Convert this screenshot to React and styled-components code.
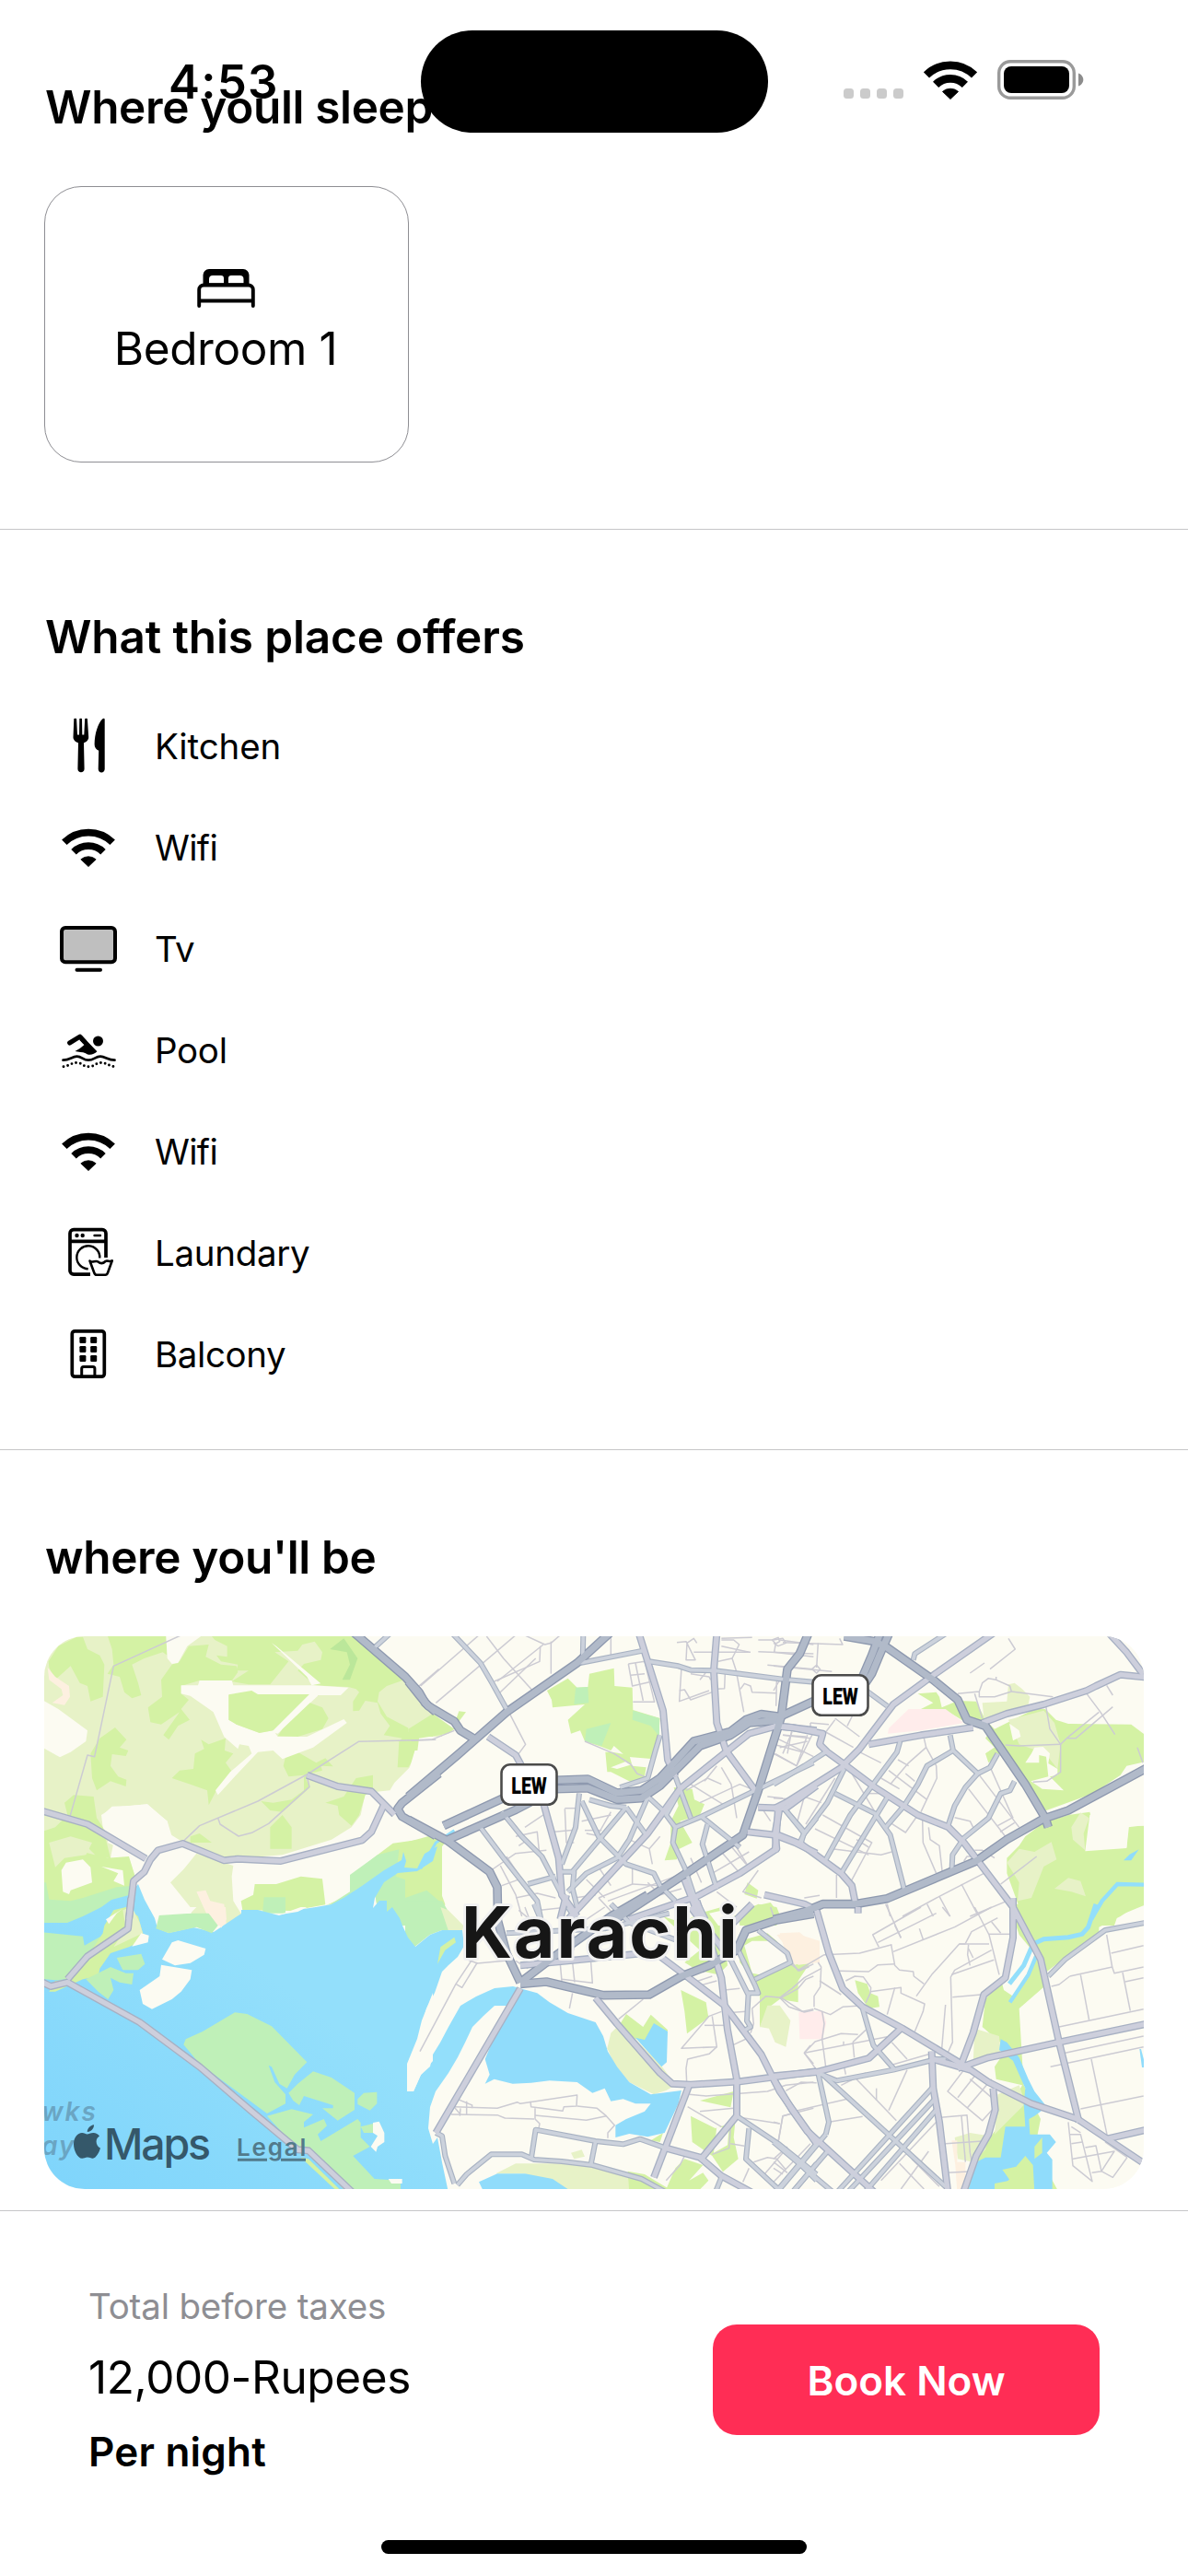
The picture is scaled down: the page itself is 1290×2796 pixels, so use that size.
import React from "react";
import styled, { createGlobalStyle } from "styled-components";

const GlobalStyle = createGlobalStyle`
  *, *::before, *::after { box-sizing: border-box; }
  html, body { margin: 0; padding: 0; background: #fff; }
  body { font-family: Inter, "Liberation Sans", sans-serif; color: #000; }
  svg { display: block; flex: none; }
`;

/* ---------- layout ---------- */

const Screen = styled.main`
  position: relative;
  display: flex;
  flex-direction: column;
  width: 1290px;
  height: 2796px;
  overflow: hidden;
  background: #fff;
`;

const StatusBar = styled.header`
  position: absolute;
  top: 0;
  left: 0;
  display: grid;
  grid-template-columns: 457px 377px 456px;
  align-items: center;
  width: 100%;
  height: 177px;
`;

const Clock = styled.time`
  padding-left: 183px;
  font-size: 51px;
  font-weight: 600;
  line-height: 60px;
  letter-spacing: 1.2px;
`;

const Island = styled.div`
  height: 111px;
  border-radius: 56px;
  background: #000;
`;

const StatusIcons = styled.div`
  display: flex;
  align-items: flex-end;
  padding-left: 82px;
  padding-bottom: 4px;
`;

const SignalDots = styled.div`
  display: flex;
  gap: 7px;
  margin-right: 22px;
  padding-bottom: 1px;
`;

const SignalDot = styled.span`
  width: 11px;
  height: 11px;
  border-radius: 3.5px;
  background: #cbcbcb;
`;

const BatterySlot = styled.div`
  margin-left: 22px;
`;

const Section = styled.section`
  padding: 86px 48px ${(p) => p.$bottom}px;
  border-bottom: 1px solid #c6c6c8;
`;

const SectionTitle = styled.h2`
  margin: 0 0 ${(p) => p.$gap}px;
  padding-left: 1px;
  font-size: 49.5px;
  font-weight: 600;
  line-height: 60px;
  letter-spacing: ${(p) => p.$tracking || 0}px;
`;

const RoomCard = styled.article`
  display: flex;
  flex-direction: column;
  align-items: center;
  gap: 14px;
  width: 396px;
  height: 300px;
  padding: 89px 2px 0 0;
  border: 1px solid #8e8e93;
  border-radius: 40px;
`;

const RoomName = styled.span`
  font-size: 49.5px;
  line-height: 60px;
  letter-spacing: -0.4px;
`;

const AmenityList = styled.ul`
  margin: 0;
  padding: 0;
  list-style: none;
`;

const Amenity = styled.li`
  display: flex;
  align-items: center;
  gap: 24px;
  height: 110px;
`;

const AmenityIcon = styled.div`
  display: flex;
  justify-content: center;
  width: 96px;
`;

const AmenityName = styled.span`
  padding-top: 1px;
  font-size: 38.5px;
  line-height: 47px;
  letter-spacing: ${(p) => p.$tracking}px;
`;

const MapCard = styled.div`
  width: 1194px;
  height: 600px;
  overflow: hidden;
  border-radius: 44px;
  background: #fcfbf2;
`;

const BookingBar = styled.footer`
  display: flex;
  justify-content: space-between;
  align-items: flex-start;
  height: 357px;
  padding: 12px 96px 0;
`;

const PriceColumn = styled.div`
  display: flex;
  flex-direction: column;
  gap: 24px;
  padding-top: 68px;
`;

const PriceNote = styled.span`
  font-size: 38.5px;
  line-height: 46px;
  letter-spacing: -0.17px;
  color: #8e8e93;
`;

const Price = styled.span`
  font-size: 49.5px;
  line-height: 60px;
  letter-spacing: -0.4px;
`;

const PricePeriod = styled.span`
  font-size: 44px;
  font-weight: 600;
  line-height: 54px;
  letter-spacing: 0.2px;
`;

const BookButton = styled.button`
  width: 420px;
  height: 120px;
  margin: 111px 0 0;
  padding: 2px 0 0;
  border: 0;
  border-radius: 26px;
  background: #ff2d55;
  color: #fff;
  font: 600 44px/54px Inter, "Liberation Sans", sans-serif;
`;

const HomeIndicator = styled.div`
  align-self: center;
  width: 462px;
  height: 15px;
  border-radius: 8px;
  background: #000;
`;

/* ---------- icons ---------- */

const arc = (r, k) => {
  const y = Math.sqrt(1 - k * k) * r;
  return `M${-r * k} ${-y}A${r} ${r} 0 0 1 ${r * k} ${-y}`;
};

function WifiIcon({ outer = 37.4, middle = 22.8, weight = 7.8, dot = 12.4, size = 58 }) {
  const k = dot * 0.66;
  return (
    <svg width={size} height={42} viewBox={`${-size / 2} -42 ${size} 42`} fill="none">
      <path d={arc(outer, 0.7)} stroke="#000" strokeWidth={weight} />
      <path d={arc(middle, 0.7)} stroke="#000" strokeWidth={weight} />
      <path
        d={`M0 -0.4L${-k} ${-k}A${dot} ${dot} 0 0 1 ${k} ${-k}Z`}
        fill="#000"
        stroke="#000"
        strokeWidth="0.8"
        strokeLinejoin="round"
      />
    </svg>
  );
}

function BatteryIcon() {
  return (
    <svg width="94" height="43" viewBox="0 0 94 43">
      <rect x="1.7" y="1.7" width="81.6" height="39.6" rx="12.5" fill="none" stroke="#9a9a9a" strokeWidth="3.4" />
      <rect x="7" y="7" width="71" height="29" rx="8" />
      <path d="M88 14.5c3 1 5.3 3.8 5.3 7s-2.3 6-5.3 7z" fill="#8c8c8c" />
    </svg>
  );
}

function BedIcon() {
  return (
    <svg width="63" height="42" viewBox="214 292 63 42">
      <path
        fillRule="evenodd"
        d="M220.5 309V298.5a6.5 6.5 0 0 1 6.5-6.5h37a6.5 6.5 0 0 1 6.5 6.5V309ZM227 307.3h16v-5.3a3 3 0 0 0-3-3h-9a4 4 0 0 0-4 4ZM248 307.3h16.5v-4.3a4 4 0 0 0-4-4h-9.5a3 3 0 0 0-3 3Z"
      />
      <path
        d="M216.2 332V314.5a5 5 0 0 1 5-5h48.6a5 5 0 0 1 5 5V332M216.2 326.5H274.8"
        fill="none"
        stroke="#000"
        strokeWidth="3.9"
        strokeLinecap="round"
      />
    </svg>
  );
}

const AmenitySvg = ({ children }) => (
  <svg width="64" height="64" viewBox="64 -32 64 64">
    {children}
  </svg>
);

const KitchenIcon = () => (
  <AmenitySvg>
    <path d="M80.3 -30q1.4 -.6 2.8 0l.9 17.5h2l.3 -17.5q1.4 -.6 2.7 0l.3 17.5h2l.9 -17.5q1.4 -.6 2.7 0l1.3 20c.2 3.5-3 5.5-5.2 6.3l.6 28.2c0 5-7.2 5-7.2 0l.6 -28.2c-2.3-.8-5.7-2.8-5.5-6.3z" />
    <path d="M113.7 -29v53.8c0 4.8-7 4.8-7 0l.5 -20c-2.5-1-4.7-3.5-4.6-7c.2-11.5 3.7-22.5 8.5-27.3c1.2-1.2 2.6-.9 2.6.5z" />
  </AmenitySvg>
);

const TvIcon = () => (
  <AmenitySvg>
    <rect x="67" y="-23" width="58" height="37.3" rx="4" fill="#bfbfbf" stroke="#000" strokeWidth="4" />
    <path d="M83.5 22.8h25.5" stroke="#000" strokeWidth="4" strokeLinecap="round" />
  </AmenitySvg>
);

const PoolIcon = () => (
  <AmenitySvg>
    <circle cx="106.5" cy="-10" r="5.5" />
    <path d="M75.6 -8L86.8 -14.8L92 -9" fill="none" stroke="#000" strokeWidth="5" strokeLinecap="round" strokeLinejoin="round" />
    <path d="M88.8 -16L105.4 1.3C102 4.5 97 6.2 93 3.3C89.5 1.5 85 2.2 81.5 1C85 -1 88.5 -3 91.5 -6L86.5 -11Z" />
    <path
      d="M68.5 10.7C76 10.7 78 6.7 83.5 6.7S90 10.7 96 10.7S103.5 6.7 109 6.7S117 10.7 124.5 10.7"
      fill="none"
      stroke="#000"
      strokeWidth="2.7"
      strokeLinecap="round"
    />
    <path
      d="M69 17.8C76 16.3 78 13.5 83.5 13.5S90 17.8 96.3 17.8S104 13.5 109.5 13.5S117 16.3 124 17.8"
      fill="none"
      stroke="#000"
      strokeWidth="2.9"
      strokeLinecap="round"
      strokeDasharray="0 4.76"
    />
  </AmenitySvg>
);

const LaundryIcon = () => (
  <AmenitySvg>
    <path
      d="M98 23.2H80a4 4 0 0 1-4-4V-21.3a4 4 0 0 1 4-4H111a4 4 0 0 1 4 4V5M76 -12.7H115"
      fill="none"
      stroke="#000"
      strokeWidth="3.7"
    />
    <circle cx="83.5" cy="-19" r="2.2" />
    <circle cx="89.7" cy="-19" r="2.2" />
    <path d="M102.5 -19h6.5" stroke="#000" strokeWidth="2.4" strokeLinecap="round" />
    <path d="M108.3 5.5A12.5 12.5 0 1 0 95.7 17.2" fill="none" stroke="#000" strokeWidth="2.4" />
    <path
      d="M97.5 8.5C100 11.5 103.5 7.5 106.5 9.5C109.5 12 112 11.5 114.5 9C117 7.5 119 10.5 121.8 8.3L117 21.5Q116.2 23.7 114.5 23.7H104.8Q103 23.7 102.3 21.5Z"
      fill="#fff"
      stroke="#000"
      strokeWidth="2.6"
      strokeLinejoin="round"
    />
  </AmenitySvg>
);

const BuildingIcon = () => (
  <AmenitySvg>
    <rect x="78.3" y="-25.2" width="35" height="49.4" rx="3" fill="none" stroke="#000" strokeWidth="3.7" />
    {[-19, -9, 1].map((y) => (
      <React.Fragment key={y}>
        <rect x="86.4" y={y} width="7" height="7" rx="1.2" />
        <rect x="98.2" y={y} width="7" height="7" rx="1.2" />
      </React.Fragment>
    ))}
    <path d="M88.7 24V15.5a2 2 0 0 1 2-2h10.2a2 2 0 0 1 2 2V24" fill="none" stroke="#000" strokeWidth="3" />
  </AmenitySvg>
);

/* ---------- map ---------- */

// The map is drawn as six tiles at three units per pixel; each entry below
// starts with the tile its coordinates belong to.
const TILES = {
  a: [40, 1770],
  b: [450, 1770],
  c: [840, 1770],
  d: [40, 2070],
  e: [450, 2070],
  f: [840, 2070],
};

const tileTransform = (id) => `translate(${TILES[id][0]} ${TILES[id][1]}) scale(.33333)`;

const FILL = {
  land: "#fcfbf2",
  meadow: "#e7f2c7",
  park: "#d4f2a4",
  forest: "#bbe79a",
  marsh: "#bff0b8",
  water: "#93dffb",
  pink: "#ffeceb",
  peach: "#fdf0e0",
};

const GROUND = [
  ["a", "meadow", "M0,0H1040L1220,160 1290,270 1320,300V345H1245L1240,400 1215,445 1165,495 1150,520 1100,525 1070,530 1055,600 1025,640 960,680 800,730 610,745 470,685 430,660 425,620 400,600 360,565 250,575 210,600 215,640 250,690 240,740 300,740 320,800 300,860 180,880 110,900 0,900Z"],
  ["a", "park", "M38,100L70,50 130,20H150L165,60 205,80 220,110 215,215 175,230 165,180 140,170 110,115 60,160 40,120Z"],
  ["a", "park", "M225,0H420L425,80 410,70 350,90 310,110 330,170 340,210 310,220 285,200 270,150 230,140 250,110 245,60Z"],
  ["a", "park", "M495,50L560,45 550,85 600,110 650,115 655,135 630,170 530,162 470,180 470,205 495,225 470,255 498,290 460,310 430,355 412,340 465,265 405,305 370,298 362,250 408,215 405,160 440,110 465,100Z"],
  ["a", "park", "M555,0H1040L1210,155 1140,180 1115,200 1110,230 1140,280 1220,322 1290,315V345H1245L1240,400 1210,445 1175,445 1180,360 1190,350 1130,340 1150,310 1120,270 1110,235 1070,228 1050,260 1030,262 1030,230 1050,200 1040,190 1015,183 905,178 850,130 870,108 925,95 930,70 905,35 865,45 850,65 775,70 820,100 760,175 690,175 635,165 690,130 650,130 655,110 600,100 585,80 620,85 620,50 580,30Z"],
  ["a", "forest", "M955,60L1000,25 1045,90 1020,160H995L1020,110 1010,70Z"],
  ["a", "park", "M205,350L255,315 292,355 270,380 298,390 290,408 245,402 240,440 265,475 292,485 290,507 240,490 195,520 180,480 175,400Z"],
  ["a", "park", "M0,660L60,640 100,600 90,560 120,535 185,540 195,610 215,640 240,740 195,735 160,700 110,690 150,720 230,740 300,735 320,800 300,860 240,870 110,900H0Z"],
  ["a", "meadow", "M40,690L110,670 180,690 160,730 90,740 60,770Z"],
  ["a", "marsh", "M0,820H30L40,875 110,880 150,870 260,835 320,830 335,880 330,960H0Z"],
  ["a", "park", "M535,355L560,370 615,350 612,390 640,400 615,430 640,465 590,510 560,568 555,520 500,500 440,480 465,455 510,450 515,400 545,385Z"],
  ["a", "park", "M810,410L850,395 910,430 940,415 965,442 925,440 930,455 890,465 875,480 890,510 800,590 760,585 730,555 770,560 830,550 870,520 870,470 820,475 803,440Z"],
  ["a", "park", "M760,640L800,600 830,640 830,710H760ZM500,670L530,660 570,690H500Z"],
  ["a", "park", "M940,560L1000,540 1040,480 1095,470 1095,525 1070,535 1050,600 1025,635 985,600 980,570Z"],
  ["a", "land", "M470,178H525L530,162H635L640,178H900L1015,185 990,210H625V290L650,305 725,332 770,325 785,345H880L1000,288 1010,300 900,380 800,418 770,390 720,395 640,480 590,535 582,520 630,460 700,400 690,375 660,370 655,385 610,345 575,265 500,212 470,205Z"],
  ["a", "park", "M625,208L700,195 720,207H890L770,325 725,333 650,305 625,290Z"],
  ["a", "land", "M890,205H915V212L785,335 765,330Z"],
  ["a", "park", "M785,343L800,320 890,235 930,250 950,285 930,320 850,345Z"],
  ["a", "land", "M765,40L780,50 925,172 895,178 880,150Z"],
  ["a", "land", "M0,215L70,255 165,325 160,360 110,395 75,412 0,370Z"],
  ["a", "land", "M420,0H560L490,50 460,105 440,108 425,90Z"],
  ["a", "peach", "M35,120L60,150 105,180 108,215 90,242 50,235 85,210 80,190 40,160Z"],
  ["a", "land", "M212,602L245,572 300,570 360,565 425,620 440,670 475,690 395,720 360,745 230,690 240,660Z"],
  ["a", "land", "M375,760L400,720 470,705 610,765 790,770 1060,700 1100,670 1130,600 1160,515 1215,445 1245,345H1320V700L1150,695 1020,800 1015,850 940,895 930,810 830,805 710,850 700,900 620,930 400,960 378,930 330,830Z"],
  ["a", "meadow", "M520,725L640,765 635,800 640,880 690,960H510L500,900 435,820 480,775Z"],
  ["a", "park", "M710,825L780,825 860,800 930,808 940,892 830,912 670,910 665,880 705,860Z"],
  ["a", "marsh", "M740,868H810V920H735Z"],
  ["a", "peach", "M520,850L550,845 565,880 610,890 618,960H570Z"],
  ["a", "land", "M80,780L95,755 150,745 175,770 180,820 110,845 105,858 85,850ZM210,768L280,780 285,830 250,815 265,790Z"],
  ["a", "park", "M1020,800L1110,730 1160,692 1320,670V960H1120L1100,850 940,895 1020,860Z"],
  ["a", "marsh", "M1020,795L1110,730 1180,712 1170,800 1215,815 1205,850 1290,880V960H1120L1100,850 950,895 1020,850Z"],
  ["b", "meadow", "M-20,200L50,250 60,265 20,320 -20,330Z"],
  ["b", "park", "M-20,320L60,270 130,320 110,335 15,350 10,390H-20Z"],
  ["b", "park", "M135,290L145,262 168,265 140,302Z"],
  ["b", "park", "M432,195L500,155 530,185 565,183 570,140 650,122 652,180 710,185 712,258 800,285 795,345 780,418 690,410 650,375 640,390 610,378 555,360 540,325 510,335 500,290 555,240 450,250 447,225Z"],
  ["b", "marsh", "M525,185L565,183 568,235 520,240ZM712,260L798,285V345L770,310 710,290ZM560,320L640,300 610,375 555,360Z"],
  ["b", "park", "M622,395L645,395 700,405 710,440 755,445 750,475 710,495 640,460 628,460Z"],
  ["b", "land", "M640,445L690,425 710,435 660,450Z"],
  ["b", "park", "M-30,690L60,665 100,690 60,740 60,800 85,850 100,890 90,960H-30Z"],
  ["b", "marsh", "M-30,870L40,845 80,880 100,960H-30Z"],
  ["b", "park", "M845,510L905,515 912,550 945,565 930,600 865,620 905,690 860,712 855,745 815,748 835,690 835,620 860,570Z"],
  ["b", "park", "M1085,820L1120,845 1115,872 1075,858ZM1020,960L1090,900 1160,885 1190,925 1180,960Z"],
  ["c", "park", "M470,205L530,200 540,215 548,250 600,228 660,230 690,290 720,320 850,255 885,255 920,290 960,303 1165,305 1205,335 1240,340V420L1150,440 1130,470 1040,530 870,592 850,540 820,490 750,390 700,430 690,400 720,380 690,350 710,320 620,295 560,258 480,255 520,235Z"],
  ["c", "park", "M692,400L735,370 740,400 705,425Z"],
  ["c", "meadow", "M680,235L760,230 765,175 785,170 810,190 835,215 830,240 685,285ZM765,290L880,260 915,300 935,370 925,450 885,400 800,370Z"],
  ["c", "land", "M768,302L800,325 805,345 780,358ZM820,430L840,400 850,380 878,378 900,400 895,432 925,450 925,470 900,475 945,520 875,515 838,490 895,475 888,410 865,405 865,430Z"],
  ["c", "pink", "M372,335L375,318 440,255H560L620,300 480,325Z"],
  ["c", "park", "M820,670L880,625 960,600 1030,590 1060,700 1150,705 1155,640 1240,630V960H790L800,900 760,790 760,740 800,700Z"],
  ["c", "land", "M1030,600L1170,500 1240,450V635H1158L1150,708 1015,718Z"],
  ["c", "meadow", "M760,755L800,710 850,720 905,688 922,745 880,768 840,870 795,880 800,820ZM915,840L960,805 1000,815 1017,865 970,850ZM970,640L1000,592 1028,610 1010,660 1015,715 975,680Z"],
  ["c", "land", "M1120,930L1205,895 1240,900V960H1110Z"],
  ["e", "marsh", "M-30,-20H90L150,80 90,75 50,90 0,130H-30Z"],
  ["e", "meadow", "M85,0L110,10 160,60 155,82 110,75Z"],
  ["e", "meadow", "M640,410L670,380 800,510 850,580 820,597 780,610 700,570 650,510 628,460Z"],
  ["e", "park", "M670,380L690,348 745,390 770,350 825,400 820,440 720,430 690,405Z"],
  ["e", "park", "M868,270L950,310 958,360 888,412 880,340Z"],
  ["e", "park", "M810,30L870,50 930,20 1000,0 1020,190 990,220 920,205 880,180 930,140Z"],
  ["e", "land", "M960,20L1050,0 1060,60 990,60Z"],
  ["e", "park", "M1040,30L1120,-10 1180,0 1190,25 1100,60 1060,50ZM1060,110L1150,85 1180,110 1230,185 1290,180 1250,240V310L1190,300 1150,330 1125,392V290L1110,270 1110,240 1060,180Z"],
  ["e", "land", "M1075,125L1100,110 1170,110 1210,150 1220,180 1125,220 1100,215Z"],
  ["e", "meadow", "M1150,320L1190,320 1225,370 1210,455 1175,440 1155,395 1125,390Z"],
  ["e", "peach", "M1180,90L1240,85 1320,110V180L1250,188 1220,140Z"],
  ["e", "park", "M900,680L980,720 1045,700 1040,750 1055,820 1005,862 970,810 905,765ZM930,630L1040,600 1030,652Z"],
  ["e", "land", "M985,715L1025,720 1020,775 975,800Z"],
  ["e", "park", "M815,930L850,850 880,820 940,840 895,890 940,865 958,890 920,930ZM770,760L810,735 800,765Z"],
  ["e", "meadow", "M265,868L330,835 480,835 600,850 760,880 850,930H510L360,868ZM510,800L545,790 555,812 520,820Z"],
  ["e", "park", "M695,860L750,870 850,930H700Z"],
  ["f", "pink", "M82,342L160,338 172,375 160,430H85Z"],
  ["f", "peach", "M20,85L85,82 125,120 115,170 70,188 40,150Z"],
  ["f", "park", "M265,238L305,250 315,280 340,290 345,325 310,330 275,280Z"],
  ["f", "park", "M785,-10H1190L1130,30 1060,65 1060,80 890,210 880,260 800,330 810,500 815,580 870,690 860,740 870,820 930,930H620L660,810 750,690 810,580 725,560 720,520 760,460 680,390 690,300 780,200Z"],
  ["f", "land", "M790,60L800,90 850,150 850,180 780,290 750,270 740,230 770,200Z"],
  ["f", "meadow", "M655,395L735,420 740,480 650,510ZM730,610L800,580 820,640 760,700 720,740ZM590,750L640,735 700,745 690,790 650,830 600,820Z"],
  ["f", "peach", "M580,760H598V830H625V930H598L592,840Z"],
];

const SEA =
  "M40,2087H73L90,2080 110,2070 121,2062 140,2057 150,2045 157,2062 168,2082 171,2093 183,2098 210,2092 232,2097 262,2077V2073H280L303,2079 323,2073 343,2070 360,2067 373,2060 393,2047 417,2030 436,2019 438,2010 441,2020 439,2027 453,2028 461,2012 475,2004 470,2020 453,2031 432,2033 417,2043 407,2060 405,2071 412,2063 420,2063V2075L426,2070 434,2082 437,2090 443,2103 451,2113 467,2100 480,2095H502L504,2112 497,2124 487,2133 480,2140 472,2163 463,2180 453,2217 445,2240V2270H449L457,2252 467,2243 470,2230 478,2217 487,2200 500,2177 517,2167 537,2158 557,2156 565,2158 550,2177H537L525,2188 513,2200 505,2217 497,2233 487,2250 473,2270 467,2287 465,2310 470,2327 475,2320 480,2347 487,2380H40Z";

const LANDING = "M470,2163L458,2193 453,2213 442,2240V2270H449L457,2252 470,2237Z";

const WATERS = [
  ["e", "M345,265L400,280 440,310 500,345 590,375 615,420 630,470 660,520 700,570 770,610 870,597 860,640 815,735 760,748 700,738 655,750 655,710 690,690 750,665 770,640 720,640 680,625 640,632 620,590 580,605 530,570 440,565 380,572 320,575 260,560 230,575 245,545 230,495 265,410 300,330Z"],
  ["e", "M720,425L750,432 780,378 825,405 822,505 805,520Z"],
  ["e", "M210,895L270,868 360,868 450,885 510,925H225Z"],
  ["c", "M1140,748L1160,728 1190,712 1165,748Z"],
  ["f", "M740,430L760,440 800,490 830,560 850,600 890,650 850,680 832,690 835,740 900,740 920,765 890,800 908,822V930H850L845,840 820,810 810,840 750,860 770,890 720,900V930H632L660,830 690,815 740,815 755,715H820L815,640 820,590 780,500 735,465Z"],
  ["f", "M1192,462L1197,462 1207,500V522H1200Z"],
];

const STREAMS = [
  ["b", 9, "130,650 70,690 20,775"],
  ["c", 13, "1215,827 1120,825 1070,880 1035,940"],
  ["f", 15, "1050,-10 1025,65 1005,88 960,98 880,104 845,120 815,190 768,250"],
  ["f", 13, "855,160 830,220 770,310"],
];

const ISLANDS = [
  ["d", "marsh", "M0,80L150,95 155,125 200,100 240,80H290L165,160 100,235 60,238 0,232Z"],
  ["d", "park", "M250,10L290,0 330,30 345,85 365,100 300,130 240,150 205,200 200,225 150,235 60,275 40,275 60,240 110,235 165,160 215,85 220,60Z"],
  ["d", "meadow", "M280,10L310,0 335,50 345,85 250,130 290,70Z"],
  ["d", "land", "M340,85L365,92 362,115 310,128ZM225,40L280,5 260,20 235,55Z"],
  ["d", "marsh", "M260,165L340,152 352,185 330,205 280,205ZM160,235L240,195 290,215 315,215 310,252 270,245 240,230 250,270 232,300 200,275Z"],
  ["d", "land", "M408,170L440,115 460,108 550,135 545,155 500,182 450,190ZM405,188L505,205 500,235 470,275 440,300 375,332 345,315 335,270 400,225Z"],
  ["d", "marsh", "M478,448L485,430 540,405 645,343 685,348 765,388 880,505 840,545 815,590 790,575 765,520 755,515 775,570 810,610V640L750,672 530,510Z"],
  ["d", "marsh", "M820,605L850,575 900,535 960,555 1035,605V660L980,695 930,655 965,655V645L870,615 855,645 835,630ZM1045,625L1065,605 1108,602V640L1085,662 1045,642Z"],
  ["d", "marsh", "M750,680L830,658 900,675 870,700V718L935,690 945,712 915,740 925,762 1045,690 1055,702V750L1085,780 1030,810 1100,885 1185,890V940H1020L885,800 850,790ZM1055,715L1095,705V735L1065,735Z"],
  ["d", "land", "M1095,702L1115,698 1132,735V765L1110,780 1105,797 1088,780 1110,745 1095,735ZM1145,885H1190V900H1155Z"],
  ["d", "park", "M860,815L885,820 985,918H970Z"],
  ["d", "marsh", "M400,20H560L590,60 570,85 520,65 430,85 388,70Z"],
  ["d", "land", "M365,0H520L500,20 385,28ZM790,25L860,0H880L850,15Z"],
  ["d", "peach", "M550,0H615L618,40 600,68 585,40 560,20Z"],
  ["e", "park", "M75,185L85,130 130,98 135,115 100,140Z"],
  ["f", "park", "M850,780L875,750V800L850,820ZM745,855L790,845 820,810 840,860 850,930H720L770,885Z"],
];

const ROADS = {
  minor: [
    ["a", "480,10 250,115 188,410 165,405 108,605"],
    ["a", "475,688 530,635 720,555 880,468 1048,361 1300,355"],
    ["a", "590,610 597,630 657,669 700,658 755,628 888,508 880,475"],
    ["a", "1245,180 1310,125"],
    ["b", "215,10 20,180"], ["b", "335,10 70,235"], ["b", "235,18 290,90 385,195"], ["b", "360,15 425,45 445,40 480,10"],
    ["b", "410,50 408,100 260,165"], ["b", "420,45 270,165"], ["b", "445,35 445,140"], ["b", "640,20 640,80"],
    ["b", "395,90 275,205"],
    ["b", "300,250 362,370 340,400"], ["b", "-10,357 55,355 130,325"], ["b", "555,360 650,400 705,435 725,465 750,475"],
    ["b", "697,108 750,100 782,232 712,232"], ["b", "697,108 710,180 775,165"], ["b", "720,105 745,228"], ["b", "705,145 750,140"],
    ["b", "870,120 863,230 960,195"], ["b", "863,195 880,192 900,225 970,200"], ["b", "900,140 960,150 965,160"], ["b", "930,160 950,135"],
    ["b", "855,38 885,35 915,95 885,95 888,40 910,25 920,40"], ["b", "910,70 1095,70"], ["b", "1000,25 1100,22"],
    ["b", "1000,30 1040,30 1058,45 1035,90 1048,130 1073,265"], ["b", "990,100 1035,90"], ["b", "1000,50 1090,70"], ["b", "985,190 1010,188 1012,140"],
    ["b", "1120,30 1165,30 1185,22 1190,35 1177,42 1165,30"], ["b", "1190,30 1300,45"], ["b", "1120,68 1300,75"], ["b", "1150,112 1300,125"],
    ["b", "1062,190 1075,172 1095,180 1100,200 1180,203"], ["b", "1180,165 1178,245"], ["b", "1177,42 1172,70"],
    ["b", "490,580 495,690 520,690"], ["b", "490,578 530,578"], ["b", "455,655 530,648"], ["b", "555,650 610,650"], ["b", "560,660 620,672"], ["b", "545,620 640,600"],
    ["b", "250,780 330,725 430,715"], ["b", "280,765 330,860 350,930"], ["b", "285,830 345,808"], ["b", "300,735 370,840"], ["b", "330,670 400,655 408,735"],
    ["b", "330,870 400,855 460,870"], ["b", "340,700 370,680"], ["b", "360,640 420,600"], ["b", "410,910 500,900"],
    ["b", "600,870 665,940"], ["b", "710,760 710,825 600,870"], ["b", "710,825 800,830"], ["b", "630,880 850,800"], ["b", "560,810 620,870"], ["b", "520,870 590,860"], ["b", "600,770 640,830"],
    ["b", "1000,445 1032,500 1050,610"], ["b", "900,500 1005,565"], ["b", "885,520 955,480"], ["b", "930,560 1060,500 1110,520"], ["b", "955,480 1000,500"], ["b", "985,440 945,490"],
    ["b", "1180,350 1300,410"], ["b", "1175,400 1245,440 1300,330"], ["b", "1230,330 1200,400"], ["b", "1190,380 1280,360"], ["b", "1200,340 1290,350"],
    ["b", "955,750 1060,690"], ["b", "970,790 1090,720"], ["b", "1000,720 1060,790"], ["b", "1030,700 1080,760"], ["b", "1040,690 1095,780"], ["b", "985,850 1050,900"], ["b", "900,740 935,820"], ["b", "870,750 900,800"],
    ["b", "700,680 765,710 775,760"], ["b", "765,710 800,670"], ["b", "760,820 800,860 870,840"], ["b", "1120,780 1070,850 1130,870"],
    ["b", "580,640 610,680"], ["b", "640,590 600,660"], ["b", "1160,620 1130,575"], ["b", "1150,540 1200,545"],
    ["c", "0,30 30,25 40,40 15,50 0,40"], ["c", "30,38 225,45 215,25"], ["c", "145,40 140,120"], ["c", "0,70 130,85"], ["c", "0,115 190,133"], ["c", "125,125 140,112 152,126 140,138 125,125"],
    ["c", "200,285 280,345"], ["c", "170,330 260,380"], ["c", "200,290 170,330"], ["c", "260,270 240,310"], ["c", "120,300 120,320"], ["c", "120,300 180,305"],
    ["c", "60,320 45,400"], ["c", "0,370 95,395"], ["c", "0,400 75,440 110,340"], ["c", "30,340 105,345"], ["c", "0,195 20,160"],
    ["c", "600,205 670,198 680,170 700,155 725,160 770,180 775,198 720,215 670,215 670,198"], ["c", "725,150 725,160"], ["c", "655,205 680,285"], ["c", "775,198 910,215"],
    ["c", "887,245 900,320 935,370 935,460 890,490 845,493"], ["c", "935,370 800,375 755,372"], ["c", "935,370 955,350 985,350 1105,248"], ["c", "955,350 1060,265"],
    ["c", "1020,205 1065,265 1112,338"], ["c", "1085,178 1105,210"], ["c", "765,25 787,60 705,125"], ["c", "640,138 687,105"], ["c", "1185,380 1203,430"],
    ["c", "857,735 740,825"], ["c", "670,470 800,640"], ["c", "635,515 755,670"], ["c", "708,450 780,610"], ["c", "730,635 780,608"], ["c", "738,655 785,625"],
    ["c", "590,608 640,620 655,650"], ["c", "350,480 410,515"], ["c", "375,455 500,550"], ["c", "405,420 440,440"], ["c", "490,350 497,380 530,440 532,480 480,590"], ["c", "497,380 440,430 380,500"], ["c", "430,465 460,490"],
    ["c", "410,580 380,625 430,657 470,600"], ["c", "485,615 487,690 530,790"], ["c", "505,640 510,680 540,700 550,790"],
    ["c", "160,600 320,690 245,830"], ["c", "135,645 310,730"], ["c", "190,710 350,730 385,720"], ["c", "205,795 205,870"], ["c", "255,465 330,590"], ["c", "270,680 310,705"],
    ["c", "280,395 320,415 350,430"], ["c", "300,530 350,530"], ["c", "100,540 155,560"], ["c", "100,540 75,630"], ["c", "200,480 105,630"], ["c", "0,545 60,548"],
    ["c", "685,790 540,865 420,930"], ["c", "612,825 665,925"], ["c", "540,865 575,930"], ["c", "370,890 380,930"], ["c", "760,880 640,930"], ["c", "500,890 520,930"], ["c", "100,870 150,862"],
    ["c", "620,750 630,735 660,735"], ["c", "655,715 680,715 720,740"],
    ["e", "205,180 155,262 135,250"], ["e", "195,160 135,250 18,470"], ["e", "310,173 205,183 170,170"], ["e", "475,185 480,240"], ["e", "515,180 522,245"], ["e", "480,235 580,247 575,180"], ["e", "515,280 505,330"],
    ["e", "745,300 665,365"], ["e", "1000,340 960,355 870,460 985,455 970,355"], ["e", "985,455 960,478 890,495 885,525 887,570"], ["e", "945,385 1010,385"], ["e", "1025,455 1100,420"],
    ["e", "120,640 150,675"], ["e", "140,625 188,645 188,655"], ["e", "170,632 170,675"], ["e", "120,675 270,677 295,687 390,690"], ["e", "130,650 270,655 335,635 345,640 530,612 528,648 487,650 483,664 380,650 378,632"],
    ["e", "393,655 393,690 408,705 405,720"], ["e", "393,678 560,694 625,680 595,655 530,648"], ["e", "625,680 652,710 630,735 630,752"], ["e", "150,655 148,680"],
    ["e", "895,610 950,615 1150,600 1210,580 1300,570"], ["e", "890,650 1000,715"], ["e", "930,665 1040,655"], ["e", "1060,685 1190,705"], ["e", "1185,765 1200,680 1300,655"], ["e", "970,805 1025,785 1030,710"], ["e", "1030,770 1075,778"],
    ["e", "1105,830 1150,815 1180,820 1210,855"], ["e", "1070,895 1090,850"], ["e", "820,890 865,840 880,810"], ["e", "1140,870 1200,800"], ["e", "1170,895 1290,770"],
    ["e", "1225,185 1255,207 1300,185"], ["e", "1300,225 1275,235 1250,265 1195,295 1145,290 1100,330 1105,380 1095,410"], ["e", "1195,295 1265,340 1300,332"], ["e", "1290,450 1270,475 1300,510"],
    ["e", "340,10 400,60 420,40"], ["e", "360,0 390,80 430,50"], ["e", "560,40 620,0"], ["e", "520,90 520,140"], ["e", "330,175 370,200"], ["e", "910,245 970,225"], ["e", "930,255 985,240"], ["e", "1010,270 1060,265"], ["e", "1160,0 1170,30"], ["e", "1010,345 1080,340"],
    ["f", "365,-10 415,100"], ["f", "480,0 323,90 343,130"], ["f", "530,20 340,115"], ["f", "550,0 575,30"], ["f", "710,0 590,65 390,145"], ["f", "475,70 487,105"], ["f", "395,60 415,100"],
    ["f", "655,0 702,90 735,220"], ["f", "730,35 645,80 625,118"], ["f", "702,88 785,88"], ["f", "710,48 740,85"], ["f", "605,120 702,120"], ["f", "625,120 605,120 515,220 465,290"], ["f", "635,122 632,155 640,190"], ["f", "635,135 650,165"], ["f", "580,220 718,172"],
    ["f", "710,140 590,205 577,228 583,440 565,480"], ["f", "583,293 675,285"], ["f", "215,208 310,210 340,188 395,185"], ["f", "383,122 395,190 410,205 455,210 457,225 490,250"],
    ["f", "165,155 280,150 385,122"], ["f", "80,205 165,155"], ["f", "60,180 80,207 115,195"], ["f", "235,240 265,225 292,227 317,262 315,280 300,312"], ["f", "315,275 415,262 415,280 492,315 487,340 460,405"], ["f", "395,262 370,350"],
    ["f", "145,180 155,195 152,260 132,290 132,325"], ["f", "132,330 185,350 225,325 270,322"], ["f", "150,240 220,285"], ["f", "20,295 60,265 100,230 155,200"], ["f", "20,295 50,325 100,342 130,335"],
    ["f", "158,340 165,380 158,430 170,520"], ["f", "100,475 135,438 220,412 275,415"], ["f", "100,475 370,422"], ["f", "100,475 140,530"], ["f", "258,440 263,490"], ["f", "300,400 258,440"], ["f", "228,437 228,450"], ["f", "560,318 548,460"], ["f", "385,440 435,495"],
    ["f", "40,598 90,570 140,572"], ["f", "65,665 240,625"], ["f", "180,700 290,682"], ["f", "0,700 20,705"], ["f", "15,765 30,680 65,670"], ["f", "270,560 400,695"], ["f", "435,530 375,662"], ["f", "335,590 335,630"], ["f", "230,520 235,545"], ["f", "220,580 300,540"],
    ["f", "620,530 567,600 680,695 730,640"], ["f", "655,550 600,620"], ["f", "710,560 630,655"], ["f", "640,560 710,620"], ["f", "545,685 630,677 640,800 650,850"], ["f", "612,680 625,830"], ["f", "560,770 680,762"], ["f", "565,865 650,860"],
    ["f", "380,515 520,475"], ["f", "400,525 500,505"],
    ["f", "902,520 1205,455"], ["f", "1035,495 1087,745"], ["f", "950,475 1205,420"], ["f", "930,390 1205,332"], ["f", "1000,220 1028,368"], ["f", "965,225 1103,195 1085,90"], ["f", "1100,150 1205,125"], ["f", "1103,195 1110,215 1205,195"], ["f", "1137,213 1162,338"], ["f", "1145,243 1205,230"], ["f", "905,258 930,252 965,225"],
    ["f", "1000,657 1205,615"], ["f", "960,700 975,842 1038,893 1000,740 965,740"], ["f", "975,820 1110,795 1068,860 1037,865"], ["f", "1015,783 1050,777 1068,860 1105,880 1152,815"], ["f", "1080,765 1152,815"], ["f", "970,770 1005,765"], ["f", "970,715 1000,735"],
    ["f", "410,835 490,918"], ["f", "505,795 415,918"], ["f", "450,820 540,910"], ["f", "0,830 45,865"], ["f", "0,820 45,780"], ["f", "30,870 0,850"], ["f", "350,870 400,820"], ["f", "530,700 350,890"],
  ],
  tertiary: [
    ["a", "1155,5 1100,55"],
    ["b", "120,5 215,105 250,165 300,255"], ["b", "550,10 548,100"], ["b", "540,105 745,65"], ["b", "765,100 860,115 900,128 980,130 1200,158 1310,168"],
    ["b", "285,590 350,670 415,735 480,860"], ["b", "215,640 290,740 400,880 412,940"], ["b", "537,530 525,640 480,760"],
    ["b", "545,555 600,670 690,760 780,790 800,830 850,880"], ["b", "765,530 700,680 660,740 560,790 500,850"], ["b", "690,575 510,790"], ["b", "690,575 755,665"],
    ["b", "470,785 520,785 515,840 530,900"], ["b", "755,535 820,595"], ["b", "800,340 785,390 760,480 670,510"], ["b", "850,475 900,610"], ["b", "850,640 935,605 1110,520 1300,430"],
    ["b", "865,520 820,600 850,640 842,690 880,770 910,860 950,940"], ["b", "935,605 1060,705"], ["b", "955,630 938,695 985,840"], ["b", "370,825 460,800"],
    ["b", "1205,580 1270,660 1310,610"], ["b", "570,550 640,570 690,575"], ["b", "1270,660 1250,700"],
    ["c", "560,10 460,75 455,95"], ["c", "370,245 295,190"], ["c", "170,395 100,440 0,500"], ["c", "230,450 175,560 100,660"], ["c", "200,530 330,595 380,665 425,840"],
    ["c", "412,360 402,395 250,600 170,745"], ["c", "372,540 220,790"], ["c", "575,340 585,390 665,465"], ["c", "585,390 500,440 470,500 425,570 365,640"], ["c", "730,400 705,445 665,465 625,510 590,570 565,645"],
    ["c", "785,490 770,520 740,530 700,610 620,675 583,730 580,790"], ["c", "35,580 100,655 90,690"],
    ["e", "130,900 100,810 90,745 70,735"], ["e", "140,905 170,870 250,805 350,805 390,822 480,828 580,840 740,885 850,945"],
    ["e", "380,822 395,725 590,762 680,772 735,755 820,785"], ["e", "590,762 575,838"], ["e", "1050,130 1110,255 1120,280 1085,280 1025,160"], ["e", "1110,235 1225,180 1215,150 1120,75"], ["e", "1088,280 1083,370 1095,390 1070,405"],
    ["e", "1050,680 1185,770 1310,870"], ["e", "1090,720 1080,820 1185,918"], ["e", "1310,770 1180,925"], ["e", "1310,835 1235,925"], ["e", "1000,880 980,930"], ["e", "1250,830 1310,890"],
    ["e", "300,85 620,70 830,20"], ["e", "390,-10 420,60"], ["e", "640,-10 700,50"], ["e", "500,0 540,60"], ["e", "700,50 860,110"],
    ["f", "895,225 950,170 1080,75 1215,50"], ["f", "145,540 205,565 390,530 530,495 560,495"], ["f", "290,330 310,400 325,450 395,530"], ["f", "145,540 180,700 170,740"], ["f", "170,740 10,930"], ["f", "520,585 210,925"], ["f", "530,660 300,925"], ["f", "160,545 560,910"], ["f", "180,790 60,930"], ["f", "530,620 240,930"],
    ["f", "0,765 190,925"],
  ],
  secondary: [
    ["a", "0,582 165,630 355,742"],
    ["a", "1130,568 1090,655 1060,682 795,750 655,743 610,748 475,693 395,715 370,745 350,785 315,815 300,940"],
    ["a", "880,470 980,507 1090,523 1165,598"],
    ["d", "307,-30 297,70 165,160 100,235"],
    ["d", "0,235 45,258 100,245 335,375 530,520 700,665 850,790 885,793 1040,940"],
    ["b", "730,5 810,260 825,420 850,475"], ["b", "985,10 975,130 985,300 1015,390 1110,520"], ["b", "1310,325 1180,310 1090,335 865,515 760,660 500,940"],
    ["b", "240,345 330,405 360,460"], ["b", "420,560 470,740 480,860 530,930"], ["b", "495,860 475,940"], ["b", "1120,575 1210,578 1310,505"], ["b", "1190,575 1175,660 1180,710 1060,790 920,865 700,940"],
    ["b", "1085,655 1175,665 1240,690 1310,725"], ["b", "880,810 930,940"],
    ["c", "720,5 520,145 390,240 280,385 230,435"], ["c", "1215,152 1130,143 1050,180 1020,195 880,240 760,270 680,300"], ["c", "1090,5 1150,70 1210,150"],
    ["c", "650,315 480,340 310,370"], ["c", "230,435 330,510 470,600 570,640 620,690 670,755 780,900 785,940"], ["c", "230,440 40,560 0,580"], ["c", "230,435 175,395 150,370 160,335 60,315 0,310"],
    ["c", "15,580 5,720"], ["c", "15,665 90,695 220,790 255,830 267,890"], ["c", "-30,860 100,890 130,905"], ["c", "275,900 275,920"],
    ["e", "345,265 190,530 70,735"], ["e", "590,295 660,380 800,540 840,575 900,578 1060,568 1310,535"], ["e", "895,580 780,880"],
    ["e", "800,160 880,220 1010,320 1130,480 1190,600 1310,770"], ["e", "920,-20 1000,230 1020,400 1050,560 1050,680 930,825"], ["e", "345,190 500,175 800,145"], ["e", "820,785 930,815 1000,875 1110,935"], ["e", "900,0 1030,170"], ["e", "1030,60 1100,-10"],
    ["f", "140,10 180,150 225,265 290,325 420,395 620,515 700,570 840,640 990,690 1080,750 1200,830"], ["f", "780,-30 780,100 755,230 685,285 650,410 610,515"], ["f", "780,0 870,170 930,440 995,700"],
    ["f", "600,525 700,490 930,440 1215,380"], ["f", "0,550 140,537 310,492 415,395"], ["f", "515,470 520,590 540,700 568,930"], ["f", "715,590 722,660 700,740 660,810 618,930"], ["f", "1085,755 1215,725"], ["f", "0,560 60,660 110,730 330,930"], ["f", "520,495 640,530"],
  ],
  highway: [
    ["a", "1020,-5 1200,150 1245,200 1265,235 1300,265"],
    ["a", "1310,465 1190,560 1175,580 1190,605 1300,668"],
    ["b", "-20,165 20,215 45,245 130,295 150,325 200,355"],
    ["b", "650,-5 530,105 300,265 140,405 -20,540"],
    ["b", "-20,615 110,685 245,785 270,835 272,940"],
    ["b", "95,635 290,545 460,487 565,483 660,528 740,520 800,480 910,360 1030,328 1080,290 1130,272 1190,280 1310,225"],
    ["b", "110,680 330,583 460,515 565,512 660,550 740,545 800,505 930,375 1030,340 1090,300 1190,292"],
    ["b", "1285,5 1255,75 1215,125 1195,280 1120,520 1070,665 900,780 640,950"],
    ["c", "230,18 330,35 370,55 520,160 600,225 630,290 690,310 820,500 885,610 895,640"],
    ["c", "380,0 345,80 320,140 300,170"],
    ["c", "350,0 320,80 290,150"],
    ["c", "1220,445 960,585 880,612 760,680 660,750 370,872 265,890 160,890 100,915 0,940"],
    ["e", "265,20 300,150 345,245"],
    ["e", "760,-40 640,30 450,165 345,245"],
    ["e", "1300,22 1180,42 1080,75 1050,140 960,190 870,225 765,285 615,287 430,243 345,250"],
  ],
};

const ROAD_ORDER = ["tertiary", "secondary", "highway"];
const ROAD_STYLE = {
  minor: { width: 4.5, fill: "#cccbd3" },
  tertiary: { width: 18, core: 11, casing: "#a9b3c3", fill: "#ccd2dc" },
  secondary: { width: 24, core: 16, casing: "#a7b0c3", fill: "#cdcfdc" },
  highway: { width: 29, core: 21, casing: "#8e99af", fill: "#b1bac9" },
};

function RoadLines({ roads, stroke, width }) {
  return roads.map(([tile, points], i) => (
    <polyline
      key={i}
      points={points}
      transform={tileTransform(tile)}
      fill="none"
      stroke={stroke}
      strokeWidth={width}
      strokeLinejoin="round"
    />
  ));
}

function Areas({ items }) {
  return items.map(([tile, kind, d], i) => (
    <path key={i} d={d} fill={FILL[kind]} transform={tileTransform(tile)} />
  ));
}

function RoadShield({ x, y }) {
  return (
    <g transform={`translate(${x} ${y})`}>
      <rect x="1.2" y="1.2" width="60" height="43.6" rx="9.5" fill="#fff" stroke="#4b4b4b" strokeWidth="2.6" />
      <text x="12" y="32.8" fontFamily="Roboto, sans-serif" fontSize="26.5" fontWeight="900" textLength="38.5" lengthAdjust="spacingAndGlyphs">
        LEW
      </text>
    </g>
  );
}

function AppleMark() {
  return (
    <svg x="80" y="2306" width="29" height="37.5" viewBox="0 0 29 37.5" fill="#35586a">
      <path d="M22 0.2C22.2 3.8 19 8 14.8 8C14.4 4.5 18 0.8 22 0.2Z" />
      <path d="M14.7 10.5C16.3 10.5 18.3 8.8 21.5 8.9C24 9 26.5 10.2 28 12.4C25.8 13.8 24.6 15.9 24.6 18.5C24.6 21.7 26.4 24.4 29 25.5C28 29.5 24.5 36.5 20.8 36.7C18.6 36.8 17.5 35.5 15 35.5C12.4 35.5 11.2 36.8 9.2 36.8C4.5 36.9 0 28.3 0 21.5C0 14 4.3 9.2 9 9.1C11.5 9 13.2 10.5 14.7 10.5Z" />
    </svg>
  );
}

function CityMap() {
  return (
    <svg width="1194" height="600" viewBox="48 1776 1194 600" fontFamily="Inter, sans-serif">
      <defs>
        <linearGradient id="sea" gradientUnits="userSpaceOnUse" x1="70" y1="2370" x2="260" y2="2120">
          <stop offset="0" stopColor="#80d5fb" />
          <stop offset="1" stopColor={FILL.water} />
        </linearGradient>
      </defs>
      <rect x="48" y="1776" width="1194" height="600" fill={FILL.land} />
      <Areas items={GROUND} />
      <path d={SEA} fill="url(#sea)" />
      <path d={LANDING} fill={FILL.land} />
      {WATERS.map(([tile, d], i) => (
        <path key={i} d={d} fill="#90dcfb" transform={tileTransform(tile)} />
      ))}
      {STREAMS.map(([tile, width, points], i) => (
        <polyline key={i} points={points} fill="none" stroke={FILL.water} strokeWidth={width} transform={tileTransform(tile)} />
      ))}
      <Areas items={ISLANDS} />
      <RoadLines roads={ROADS.minor} stroke={ROAD_STYLE.minor.fill} width={ROAD_STYLE.minor.width} />
      {ROAD_ORDER.map((kind) => (
        <RoadLines key={kind} roads={ROADS[kind]} stroke={ROAD_STYLE[kind].casing} width={ROAD_STYLE[kind].width} />
      ))}
      {ROAD_ORDER.map((kind) => (
        <RoadLines key={kind} roads={ROADS[kind]} stroke={ROAD_STYLE[kind].fill} width={ROAD_STYLE[kind].core} />
      ))}
      <RoadShield x={543.3} y={1914} />
      <RoadShield x={881.3} y={1817} />
      <text
        x="501"
        y="2124.7"
        fontSize="76.6"
        fontWeight="700"
        letterSpacing="2"
        fill="#161616"
        stroke="#f1f1f1"
        strokeWidth="6"
        strokeLinejoin="round"
        paintOrder="stroke"
      >
        Karachi
      </text>
      <g fill="#6aa5c3" fontSize="28" fontWeight="600" fontStyle="italic" letterSpacing="2">
        <text x="45" y="2301.7">wks</text>
        <text x="45" y="2338.5">ay</text>
      </g>
      <AppleMark />
      <text x="113" y="2344" fontSize="46.5" fontWeight="500" letterSpacing="-2.2" fill="#35586a">
        Maps
      </text>
      <text x="257" y="2339.5" fontSize="26" fontWeight="600" letterSpacing="1.8" fill="#527a8b">
        Legal
      </text>
      <path d="M258 2344.3H290M305 2344.3H332" stroke="#527a8b" strokeWidth="3" />
    </svg>
  );
}

/* ---------- screen ---------- */

const AMENITIES = [
  { name: "Kitchen", icon: <KitchenIcon />, tracking: -0.1 },
  { name: "Wifi", icon: <WifiIcon />, tracking: -0.7 },
  { name: "Tv", icon: <TvIcon />, tracking: -0.5 },
  { name: "Pool", icon: <PoolIcon />, tracking: -0.3 },
  { name: "Wifi", icon: <WifiIcon />, tracking: -0.7 },
  { name: "Laundary", icon: <LaundryIcon />, tracking: -0.3 },
  { name: "Balcony", icon: <BuildingIcon />, tracking: -0.4 },
];

export default function App() {
  return (
    <Screen>
      <GlobalStyle />
      <Section $bottom={72}>
        <SectionTitle $gap={56} $tracking={-0.35}>Where youll sleep</SectionTitle>
        <RoomCard>
          <BedIcon />
          <RoomName>Bedroom 1</RoomName>
        </RoomCard>
      </Section>

      <Section $bottom={48}>
        <SectionTitle $gap={34} $tracking={-0.15}>What this place offers</SectionTitle>
        <AmenityList>
          {AMENITIES.map(({ name, icon, tracking }, i) => (
            <Amenity key={i}>
              <AmenityIcon>{icon}</AmenityIcon>
              <AmenityName $tracking={tracking}>{name}</AmenityName>
            </Amenity>
          ))}
        </AmenityList>
      </Section>

      <Section $bottom={23}>
        <SectionTitle $gap={56} $tracking={-0.35}>where you'll be</SectionTitle>
        <MapCard>
          <CityMap />
        </MapCard>
      </Section>

      <BookingBar>
        <PriceColumn>
          <PriceNote>Total before taxes</PriceNote>
          <Price>12,000-Rupees</Price>
          <PricePeriod>Per night</PricePeriod>
        </PriceColumn>
        <BookButton type="button">Book Now</BookButton>
      </BookingBar>
      <HomeIndicator />

      <StatusBar>
        <Clock>4:53</Clock>
        <Island />
        <StatusIcons>
          <SignalDots>
            {[0, 1, 2, 3].map((i) => (
              <SignalDot key={i} />
            ))}
          </SignalDots>
          <WifiIcon outer={37.2} middle={22.7} weight={8.8} dot={13} />
          <BatterySlot>
            <BatteryIcon />
          </BatterySlot>
        </StatusIcons>
      </StatusBar>
    </Screen>
  );
}
